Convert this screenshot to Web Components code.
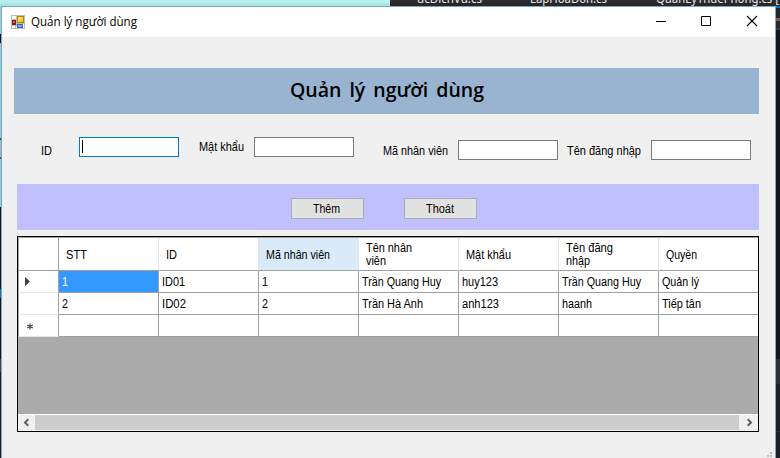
<!DOCTYPE html>
<html lang="vi"><head><meta charset="utf-8"><title>Quản lý người dùng</title>
<style>
html,body{margin:0;width:780px;height:458px;overflow:hidden}
body{font:12px/14px "Liberation Sans",Arial,sans-serif;color:#000}
</style></head><body>
<app-desktop>
  <tab-strip slot="tabs"></tab-strip>
  <form-window></form-window>
</app-desktop>
<script>
const define=(name,html,setup)=>{
  const t=document.createElement('template');t.innerHTML=html;
  customElements.define(name,class extends HTMLElement{
    connectedCallback(){
      if(this.shadowRoot)return;
      this.attachShadow({mode:'open'}).append(t.content.cloneNode(true));
      if(setup)setup(this,this.shadowRoot);
    }
  });
};

/* Single line of text condensed or stretched to the width in its "w" attribute. */
define('fit-text',`<style>:host{display:block;white-space:nowrap}span{display:inline-block;transform-origin:0 50%}</style><span><slot></slot></span>`,
(h,r)=>{
  const w=+h.getAttribute('w');h.style.width=w+'px';
  const s=r.querySelector('span');
  const n=s.getBoundingClientRect().width;
  if(n)s.style.transform='scaleX('+(w/n)+')';
});

define('tab-strip',`<style>
:host{display:flex;height:6px;overflow:hidden;background:linear-gradient(#b9f5f4,#a9dfde)}
.d{margin-left:390px;width:390px;height:6px;background:linear-gradient(#2d2d30,#252528);display:flex;color:#e8e8e8;font:12px/14px "Noto Sans",sans-serif}
fit-text{margin-top:-8px;flex:none}
</style><div class="d"><fit-text w="65" style="margin-left:27px">ucDichVu.cs</fit-text><fit-text w="77" style="margin-left:48px">LapHoaDon.cs</fit-text><fit-text w="123" style="margin-left:49px">QuanLyThuePhong.cs [</fit-text></div>`);

define('app-desktop',`<style>
:host{display:grid;grid-template:6px 452px/1px 775px 4px;width:780px;height:458px}
::slotted(tab-strip){grid-column:1/4}
.l{background:linear-gradient(#8fd3d5 0 28px,#06063c 28px 37px,#8fcfd2 37px 132px,#0a58a8 132px 134px,#b0b0b0 134px 151px,#0a58a8 151px 153px,#8fd3d5 153px 201px,#16161a 201px 283px,#1e68a8 283px 292px,#16161a 292px 353px,#444548 353px 366px,#202022 366px)}
.r{background:linear-gradient(#007acc 0 2px,#252528 2px 12px,#8a5a42 12px 15px,#29292b 15px 22px,#38383a 22px 24px,#161616 24px 353px,#303032 353px 378px,#202022 378px 425px,#333335 425px 426px,#202022 426px)}
</style><slot name="tabs"></slot><div class="l"></div><slot></slot><div class="r"></div>`);

define('title-bar',`<style>
:host{display:flex;height:30px;background:#fff;align-items:center}
.i{margin:0 6px 1px 9px;flex:none}
.c{margin-left:auto;flex:none}
fit-text{font:12px/16px "Open Sans","Noto Sans",sans-serif}
svg{display:block}
</style>
<svg class="i" width="14" height="14" shape-rendering="crispEdges"><defs><linearGradient id="y" x2="1" y2="1"><stop stop-color="#fff0a0"/><stop offset="1" stop-color="#efb310"/></linearGradient></defs><rect width="14" height="14" fill="#bdbdbd"/><path d="M1 1h4v3H1zM1 11h3v2H1zM5 11h1v2H5zM12 9h1v4h-1z" fill="#fff"/><rect x="6" y="1" width="7" height="7" fill="#b58500"/><rect x="7" y="2" width="5" height="5" fill="url(#y)"/><rect x="1" y="5" width="4" height="5" fill="#8e1b10"/><rect x="2" y="6" width="2" height="2" fill="#d65b4a"/><rect x="6" y="9" width="6" height="4" fill="#3466c4"/><rect x="7" y="10" width="4" height="2" fill="#82adf5"/></svg>
<fit-text w="106"><slot></slot></fit-text>
<svg class="c" width="119" height="30" fill="none" stroke="#000"><path d="M0 14.5h10M45.500 9.500h9v9h-9z"/><path d="M91 9l10 10M101 9L91 19" stroke-width="1.1"/></svg>`);

define('text-box',`<style>
:host{display:block;box-sizing:border-box;width:100px;height:20px;border:1px solid #7a7a7a;background:#fff;flex:none}
:host([active]){border-color:#0078d7;padding:2px}
:host([active])::before{content:"";display:block;width:1px;height:13px;background:#000}
</style>`);

define('push-button',`<style>
:host{display:flex;box-sizing:border-box;width:73px;height:21px;border:1px solid #adadad;background:#e1e1e1;justify-content:center;padding:3px 2px 0 0;flex:none}
</style><slot></slot>`);

define('scroll-bar',`<style>
:host{display:flex;height:15px;border-top:1px solid #fff;border-bottom:1px solid #f0f0f0;background:#f0f0f0}
.t{flex:1;background:#cdcdcd}svg{display:block;flex:none}
</style><svg width="17" height="15" fill="none" stroke="#606060" stroke-width="2"><path d="M10.300 4.300L7 7.500l3.300 3.200"/></svg><div class="t"></div><svg width="19" height="15" fill="none" stroke="#606060" stroke-width="2"><path d="M8.700 4.300L12 7.500l-3.300 3.200"/></svg>`);

define('data-grid',`<style>
:host{display:flex;flex-direction:column;box-sizing:border-box;width:742px;height:196px;border:1px solid #000;background:#ababab}
.h,.r{display:grid;grid-template-columns:41px repeat(6,100px) 99px;background:#fff}
.h{height:34px;border-top:1px solid #a0a0a0;box-sizing:border-box}
.r{height:22px}
.h>div,.r>div{box-sizing:border-box;border-right:1px solid #a0a0a0;border-bottom:1px solid #a0a0a0}
.h>div{border-right-color:#e5e5e5;display:flex;flex-direction:column;justify-content:center;padding:2px 0 0 7px}
.h>div fit-text{line-height:13px}
.h>div:first-child,.r>div:first-child{border-right-color:#a0a0a0;border-left:1px solid #a0a0a0}
.r>div:first-child{border-bottom-color:#e5e5e5}
.r>div{padding:4px 0 0 3px}
.h>div:last-child,.r>div:last-child{border-right:0}
.h>.hot{background:#d9ebf9;border-right-color:#d9ebf9}
.r>.sel{background:#39f;color:#fff}
scroll-bar{margin-top:auto}svg{display:block}
</style>
<div class="h"></div><div class="r"></div><div class="r"></div><div class="r"></div><scroll-bar></scroll-bar>`,
(h,r)=>{
  const txt=([s,w])=>`<fit-text w="${w}">${s}</fit-text>`;
  const head=[[['STT',21]],[['ID',11]],[['Mã nhân viên',64]],[['Tên nhân',46],['viên',20]],[['Mật khẩu',45]],[['Tên đăng',47],['nhập',24]],[['Quyền',31]]];
  r.querySelector('.h').innerHTML='<div></div>'+head.map((c,i)=>`<div${i==2?' class="hot"':''}>${c.map(txt).join('')}</div>`).join('');
  const rows=[[['1',6],['ID01',23],['1',6],['Trần Quang Huy',79],['huy123',36],['Trần Quang Huy',79],['Quản lý',37]],
    [['2',6],['ID02',24],['2',6],['Trần Hà Anh',61],['anh123',37],['haanh',30],['Tiếp tân',39]],[0,0,0,0,0,0,0]];
  const marks=['<path d="M3 4v9l5-4.500z" fill="#404040"/>','','<path d="M8 6.500v6M5.200 8l5.600 3M5.200 11l5.600-3" stroke="#404040" stroke-width="1.200"/>'];
  r.querySelectorAll('.r').forEach((e,j)=>{
    e.innerHTML=`<div><svg width="16" height="17" style="margin-top:-2px">${marks[j]}</svg></div>`+rows[j].map((c,i)=>`<div${i+j==0?' class="sel"':''}>${c?txt(c):''}</div>`).join('');
  });
});

define('form-window',`<style>
:host{display:block;box-sizing:border-box;width:775px;height:452px;border:solid #7da7c4;border-width:1px 1px 0;background:#f0f0f0;position:relative}
.banner{margin:31px 0 0 12px;width:745px;height:46px;background:#99b4d1;display:flex;justify-content:center;box-sizing:border-box;padding-top:9px;font:600 20px/26px "Open Sans",sans-serif;word-spacing:3px}
.fields{display:flex;height:47px;padding:23px 0 0 39px}
.fields .f{display:flex;align-items:flex-start}
.bar{margin-left:15px;width:742px;height:46px;box-sizing:border-box;padding:14px 0 0 274px;background:#c0c0ff;display:flex;gap:40px}
data-grid{margin:6px 0 0 15px}
.grip{position:absolute;right:2px;bottom:0}
</style>
<title-bar>Quản lý người dùng</title-bar>
<div class="banner"><fit-text w="194">Quản lý người dùng</fit-text></div>
<div class="fields">
<div class="f" style="gap:27px"><fit-text w="11" style="margin-top:7px">ID</fit-text><text-box active></text-box></div>
<div class="f" style="gap:10px;margin-left:20px"><fit-text w="45" style="margin-top:3px">Mật khẩu</fit-text><text-box></text-box></div>
<div class="f" style="gap:10px;margin-left:29px"><fit-text w="65" style="margin-top:7px">Mã nhân viên</fit-text><text-box style="margin-top:3px"></text-box></div>
<div class="f" style="gap:10px;margin-left:9px"><fit-text w="74" style="margin-top:7px">Tên đăng nhập</fit-text><text-box style="margin-top:3px"></text-box></div>
</div>
<div class="bar"><push-button><fit-text w="27">Thêm</fit-text></push-button><push-button><fit-text w="28">Thoát</fit-text></push-button></div>
<data-grid></data-grid>
<svg class="grip" width="6" height="6" fill="#bfbfbf"><path d="M3 0h2v2H3zM0 3h2v2H0zM3 3h2v2H3z"/></svg>`);
</script></body></html>
